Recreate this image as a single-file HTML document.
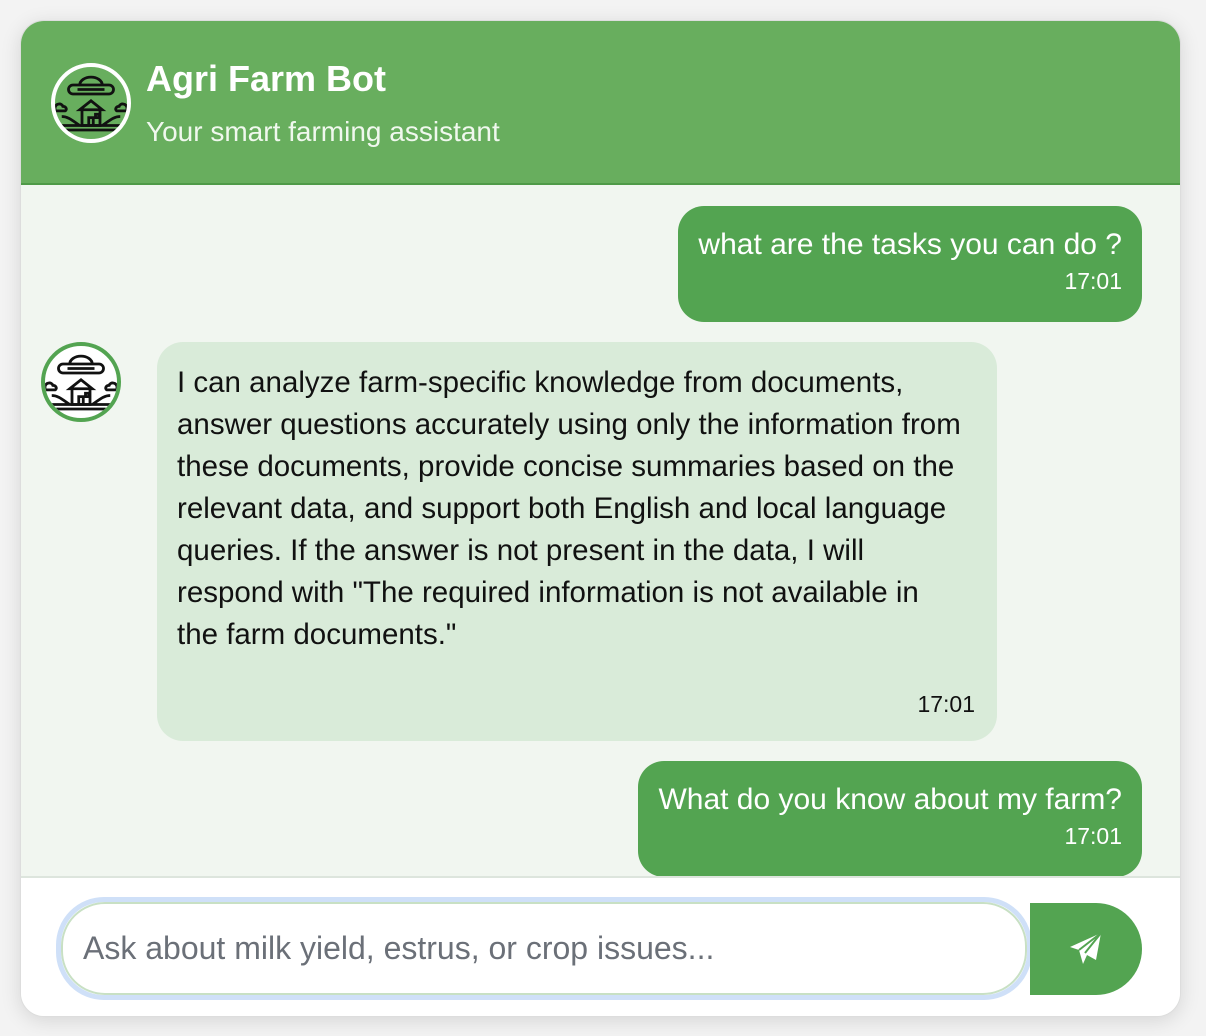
<!DOCTYPE html>
<html><head><style>
*{box-sizing:border-box;margin:0;padding:0}
body{width:1206px;height:1036px;background:#f3f3f3;font-family:"Liberation Sans",Arial,sans-serif;position:relative;overflow:hidden}
.card{position:absolute;left:20px;top:20px;width:1161px;height:997px;border-radius:24px;background:#f1f6f0;overflow:hidden;box-shadow:0 4px 20px rgba(0,0,0,.12);border:1px solid #ddd}
.hdr{position:absolute;left:0;top:0;width:100%;height:164px;background:#68ae5e;border-bottom:2px solid #4f9a48}
.hav{position:absolute;left:30px;top:42px;width:80px;height:80px;border-radius:50%;background:#68ae5e;border:4px solid #fff;overflow:hidden}
.t1{position:absolute;left:125px;top:37px;color:#fff;font-weight:bold;font-size:36px}
.t2{position:absolute;left:125px;top:95px;color:#f0f8ee;font-size:28px}
.ub{position:absolute;background:#53a451;color:#fff;border-radius:26px;font-size:30px;text-align:right}
.ts{font-size:23px;margin-top:6px}
.bb{position:absolute;left:136px;top:321px;width:840px;height:399px;background:#d9ebd9;border-radius:26px;padding:20px 36px 20px 20px;font-size:29.5px;line-height:42px;color:#111}
.bav{position:absolute;left:20px;top:321px;width:80px;height:80px;border-radius:50%;background:#fff;border:4px solid #53a451;overflow:hidden}
.inp{position:absolute;left:0;top:855px;width:100%;height:142px;background:#fff;border-top:2px solid #dde5dd}
.field{position:absolute;left:35px;top:19px;width:976px;height:103px;border:5px solid #cfe0f8;border-radius:48px}
.field div{position:absolute;inset:0;border:2px solid #c8e0c4;border-radius:44px;font-size:32px;color:#6b7078;padding:26px 20px}
.send{position:absolute;left:1009px;top:25px;width:112px;height:92px;background:#53a451;border-radius:0 46px 46px 0}
</style></head><body>
<div class="card">
<div class="hdr">
<div class="hav"><svg width="72" height="72" viewBox="4 10 64 56" fill="none" stroke="#111" stroke-width="2.5"><path d="M26 22a10 7 0 0 1 20 0"/><rect x="16" y="22" width="40" height="8" rx="4"/><path d="M24 26h24"/><path d="M26 44l10-8 10 8zM28 44v14h16V44M34 58v-7h4v7M40 48h3v3h-3z"/><path d="M4 42c1-4 6-4 7-1 3 0 4 3 2 4H4zM68 42c-1-4-6-4-7-1-3 0-4 3-2 4h9z"/><path d="M10 50c6 0 10 4 16 8M62 50c-6 0-10 4-16 8M10 58h52M14 62h44"/></svg></div>
<div class="t1">Agri Farm Bot</div>
<div class="t2">Your smart farming assistant</div>
</div>
<div class="ub" style="left:657px;top:185px;width:464px;height:116px;padding:22px 20px">what are the tasks you can do ?<div class="ts">17:01</div></div>
<div class="bav"><svg width="72" height="72" viewBox="4 10 64 56" fill="none" stroke="#111" stroke-width="2.5"><path d="M26 22a10 7 0 0 1 20 0"/><rect x="16" y="22" width="40" height="8" rx="4"/><path d="M24 26h24"/><path d="M26 44l10-8 10 8zM28 44v14h16V44M34 58v-7h4v7M40 48h3v3h-3z"/><path d="M4 42c1-4 6-4 7-1 3 0 4 3 2 4H4zM68 42c-1-4-6-4-7-1-3 0-4 3-2 4h9z"/><path d="M10 50c6 0 10 4 16 8M62 50c-6 0-10 4-16 8M10 58h52M14 62h44"/></svg></div>
<div class="bb">I can analyze farm-specific knowledge from documents, answer questions accurately using only the information from these documents, provide concise summaries based on the relevant data, and support both English and local language queries. If the answer is not present in the data, I will respond with "The required information is not available in the farm documents."<div style="position:absolute;right:22px;bottom:24px;font-size:23px;line-height:26px">17:01</div></div>
<div class="ub" style="left:617px;top:740px;width:504px;height:116px;padding:22px 20px">What do you know about my farm?<div class="ts">17:01</div></div>
<div class="inp">
<div class="field"><div>Ask about milk yield, estrus, or crop issues...</div></div>
<div class="send"><svg style="position:absolute;left:38px;top:28px" width="36" height="36" viewBox="0 0 36 36"><path d="M33 2L2 16l9 3 4 14 4-9 9 5z" fill="#fff"/><path d="M11 19L33 2 17 22" stroke="#53a451" stroke-width="2" fill="none"/></svg></div>
</div>
</div>
</body></html>
